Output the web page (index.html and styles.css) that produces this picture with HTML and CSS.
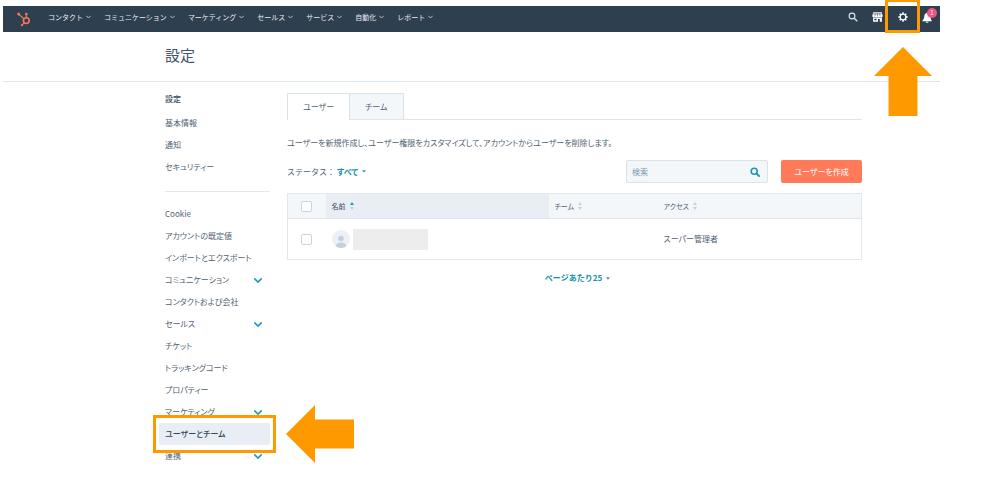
FILE: index.html
```html
<!DOCTYPE html>
<html lang="ja">
<head>
<meta charset="utf-8">
<meta name="viewport" content="width=device-width, initial-scale=1">
<title>設定</title>
<link rel="stylesheet" href="styles.css">
</head>
<body>
<svg class="defs" width="0" height="0" aria-hidden="true">
  <symbol id="chevron" viewBox="0 0 10 6"><path d="M1 1l4 4 4-4" fill="none" stroke="currentColor" stroke-width="2" stroke-linecap="round" stroke-linejoin="round"/></symbol>
  <symbol id="caret" viewBox="0 0 6 4"><path d="M0 0h6L3 4z" fill="currentColor"/></symbol>
  <symbol id="sort" viewBox="0 0 4 8"><path class="sort-up" d="M0 3l2-3 2 3z"/><path class="sort-down" d="M0 5h4L2 8z"/></symbol>
</svg>
<div class="app">
  <header class="topbar">
    <a class="logo" href="#" aria-label="ホーム">
      <svg width="14" height="15" viewBox="0 0 14 15" fill="none" stroke="#f8765a">
        <circle cx="9.3" cy="8.6" r="2.9" stroke-width="1.6"/>
        <path d="M9.3 5.5V2.4M7 6.7L1.8 2.4M7.2 10.8l-2 2" stroke-width="1.2"/>
        <g fill="#f8765a" stroke="none"><circle cx="9.3" cy="2" r="1.3"/><circle cx="1.7" cy="2.1" r="1.5"/><circle cx="4.9" cy="13.2" r="1.1"/></g>
      </svg>
    </a>
    <nav class="topnav">
      <button class="topnav-item">コンタクト<svg class="chev-small"><use href="#chevron"/></svg></button>
      <button class="topnav-item">コミュニケーション<svg class="chev-small"><use href="#chevron"/></svg></button>
      <button class="topnav-item">マーケティング<svg class="chev-small"><use href="#chevron"/></svg></button>
      <button class="topnav-item">セールス<svg class="chev-small"><use href="#chevron"/></svg></button>
      <button class="topnav-item">サービス<svg class="chev-small"><use href="#chevron"/></svg></button>
      <button class="topnav-item">自動化<svg class="chev-small"><use href="#chevron"/></svg></button>
      <button class="topnav-item">レポート<svg class="chev-small"><use href="#chevron"/></svg></button>
    </nav>
    <div class="tools">
      <button class="tool" aria-label="検索">
        <svg width="10" height="10" viewBox="0 0 10 10" fill="none" stroke="#dfe5ec"><circle cx="4" cy="4" r="2.9" stroke-width="1.1"/><path d="M6.2 6.2L9.3 9.3" stroke-width="1.3"/></svg>
      </button>
      <button class="tool" aria-label="マーケットプレイス">
        <svg width="11" height="10" viewBox="0 0 11 10"><path d="M1.2.2h8.6l.9 3.6c0 1-.6 1.5-1.2 1.5S8.3 4.900 8.1 4.400C7.900 4.900 7.400 5.300 6.800 5.300S5.700 4.900 5.500 4.400c-.2.5-.7.9-1.300.9s-1.100-.4-1.300-.9c-.2.5-.8.9-1.400.9S.3 4.800.3 3.800z" fill="#fff"/><path d="M3.400.8l-.4 3M5.500.8v3M7.600.8l.4 3M.8 1.900h9.400" stroke="#2e3f50" stroke-width=".5"/><path d="M1.100 5.600h8.800v4.200H7.800V7.100H6v2.700H1.100zM2.300 6.800v1.500h2.300V6.800z" fill="#fff" fill-rule="evenodd"/></svg>
      </button>
      <button class="tool gear" aria-label="設定">
        <svg width="10" height="10" viewBox="0 0 10 10" fill="none" stroke="#fff"><circle cx="5" cy="5" r="2.900" stroke-width="1.300"/><path d="M5 .3v1.800M5 7.900v1.800M.3 5h1.800M7.900 5h1.800M1.700 1.700l1.200 1.200M7.100 7.100l1.200 1.200M1.700 8.300l1.200-1.200M7.100 2.900l1.200-1.200" stroke-width="1.500"/></svg>
      </button>
      <button class="tool" aria-label="通知 1件">
        <svg width="11" height="11" viewBox="0 0 11 11" fill="#fff"><path d="M5.500.8C3 1 2.300 3 2.200 5 2.100 6.800 1.300 7.600.5 8.500V9.200h9.200V8.500C8.800 7.600 8.700 6.500 8.600 5 8.500 3 8 1 5.500.8zM3.600 9.700h3c-.2 1.400-2.800 1.400-3 0z"/></svg>
        <span class="badge">1</span>
      </button>
    </div>
    <div class="mark-gear"></div>
    <svg class="arrow-up" width="58" height="69" viewBox="0 0 58 69"><path d="M29 0l29 29H43.500v40h-29V29H0z" fill="#ff9900"/></svg>
  </header>
  <div class="page-head"><h1>設定</h1></div>
  <div class="layout">
    <aside class="side">
      <h2>設定</h2>
      <ul class="menu">
        <li><a href="#">基本情報</a></li>
        <li><a href="#">通知</a></li>
        <li><a href="#">セキュリティー</a></li>
      </ul>
      <hr>
      <ul class="menu">
        <li><a href="#">Cookie</a></li>
        <li><a href="#">アカウントの既定値</a></li>
        <li><a href="#">インポートとエクスポート</a></li>
        <li><a href="#">コミュニケーション<svg class="chev"><use href="#chevron"/></svg></a></li>
        <li><a href="#">コンタクトおよび会社</a></li>
        <li><a href="#">セールス<svg class="chev"><use href="#chevron"/></svg></a></li>
        <li><a href="#">チケット</a></li>
        <li><a href="#">トラッキングコード</a></li>
        <li><a href="#">プロパティー</a></li>
        <li><a href="#">マーケティング<svg class="chev"><use href="#chevron"/></svg></a></li>
        <li class="current"><a href="#" aria-current="page">ユーザーとチーム</a>
          <span class="mark-menu"></span>
          <svg class="arrow-left" width="68" height="58" viewBox="0 0 68 58"><path d="M0 29L29 0v14.500h39v29H29V58z" fill="#ff9900"/></svg>
        </li>
        <li><a href="#">連携<svg class="chev"><use href="#chevron"/></svg></a></li>
      </ul>
    </aside>
    <main class="main">
      <div class="tabs" role="tablist">
        <button class="tab active" role="tab" aria-selected="true">ユーザー</button>
        <button class="tab" role="tab" aria-selected="false">チーム</button>
      </div>
      <p class="lead">ユーザーを新規作成し、ユーザー権限をカスタマイズして、アカウントからユーザーを削除します。</p>
      <div class="filters">
        <span class="filter-label">ステータス：</span>
        <button class="link-button">すべて<svg class="caret"><use href="#caret"/></svg></button>
        <label class="search">
          <input type="search" placeholder="検索" aria-label="検索">
          <svg width="10" height="10" viewBox="0 0 10 10" fill="none" stroke="#1c98b2"><circle cx="4.200" cy="4.200" r="3" stroke-width="1.600"/><path d="M6.400 6.400L9 9" stroke-width="1.900" stroke-linecap="round"/></svg>
        </label>
        <button class="primary">ユーザーを作成</button>
      </div>
      <table class="users">
        <colgroup><col class="col-check"><col class="col-name"><col class="col-team"><col></colgroup>
        <thead>
          <tr>
            <th><input type="checkbox" aria-label="すべて選択"></th>
            <th class="sorted">名前<svg class="sort"><use href="#sort"/></svg></th>
            <th>チーム<svg class="sort"><use href="#sort"/></svg></th>
            <th>アクセス<svg class="sort"><use href="#sort"/></svg></th>
          </tr>
        </thead>
        <tbody>
          <tr>
            <td><input type="checkbox" aria-label="ユーザーを選択"></td>
            <td><div class="person">
              <svg width="18" height="18" viewBox="0 0 18 18"><circle cx="9" cy="9" r="9" fill="#edf1f6"/><circle cx="9" cy="8.500" r="2.800" fill="#c4d0df"/><path d="M3.800 16.200c0-5 10.400-5 10.400 0-3 2.400-7.400 2.400-10.400 0z" fill="#c4d0df"/></svg>
              <span class="redacted"></span></div></td>
            <td></td>
            <td>スーパー管理者</td>
          </tr>
        </tbody>
      </table>
      <div class="pager"><button class="link-button">ページあたり25<svg class="caret"><use href="#caret"/></svg></button></div>
    </main>
  </div>
</div>
</body>
</html>
```
FILE: styles.css
```css
* { box-sizing: border-box; }

body {
  margin: 0;
  background: #fff;
  color: #506172;
  font: 8px/12px "Noto Sans CJK JP", sans-serif;
  font-feature-settings: "palt";
}

.defs { position: absolute; }
svg { display: block; flex: none; }
h1, h2, p, ul { margin: 0; padding: 0; }
ul { list-style: none; }
a { color: inherit; text-decoration: none; }
button {
  margin: 0;
  padding: 0;
  border: 0;
  background: none;
  color: inherit;
  font: inherit;
  font-feature-settings: inherit;
  cursor: pointer;
}

.app { margin: 6px 60px 0 3px; }

.topbar {
  position: relative;
  display: flex;
  align-items: center;
  height: 26px;
  padding: 0 7px 4px 14px;
  background: #2e3f50;
  color: #e8edf2;
}
.logo { margin: 4px 17px 0 0; }
.topnav { display: flex; gap: 13px; font-size: 7px; font-feature-settings: normal; }
.topnav-item { display: flex; align-items: center; gap: 3px; }
.chev-small { width: 5px; height: 4px; color: #b5c0cc; }
.tools { display: flex; gap: 14px; margin-left: auto; }
.tool { position: relative; display: grid; place-items: center; width: 11px; height: 12px; }
.badge {
  position: absolute;
  top: -3px;
  left: 5px;
  width: 10px;
  height: 10px;
  border-radius: 50%;
  background: #f2547d;
  color: #fff;
  font-size: 6px;
  line-height: 10px;
  text-align: center;
}
.mark-gear {
  position: absolute;
  top: -7px;
  right: 20px;
  width: 35px;
  height: 34px;
  border: 3px solid #ff9900;
}
.arrow-up { position: absolute; top: 41px; right: 8px; z-index: 1; }

.page-head { padding: 11px 0 14px 162px; border-bottom: 1px solid #dfe5ed; }
h1 { color: #425467; font-size: 15px; font-weight: 400; line-height: 24px; font-feature-settings: normal; }

.layout {
  display: grid;
  grid-template-columns: 111px 1fr;
  gap: 17px;
  padding: 11px 78px 0 156px;
}
.side h2 { margin: 0 0 7px 6px; color: #33475b; font-size: 8px; font-weight: 500; line-height: 12px; }
.side hr { height: 1px; margin: 13px 0 11px 6px; border: 0; background: #e3e8ef; }
.menu a {
  display: flex;
  align-items: center;
  justify-content: space-between;
  height: 22px;
  padding: 0 8px 0 6px;
  white-space: nowrap;
}
.chev { width: 8px; height: 5px; color: #1c9fb8; }
.current { position: relative; }
.current a { border-radius: 2px; background: #e9eef5; color: #33475b; font-weight: 500; }
.mark-menu {
  position: absolute;
  top: -8px;
  left: -6px;
  width: 123px;
  height: 38px;
  border: 3px solid #ff9900;
}
.arrow-left { position: absolute; top: -18px; left: 127px; }

.tabs { display: flex; border-bottom: 1px solid #dfe5ed; }
.tab {
  height: 26px;
  padding: 0 15px;
  border: 1px solid #dae2eb;
  border-bottom: 0;
  border-left: 0;
  background: #f4f7fa;
}
.tab.active { height: 27px; margin-bottom: -1px; border-left: 1px solid #dae2eb; background: #fff; }
.lead { margin: 17px 0 11px; }
.filters { display: flex; align-items: center; }
.filter-label { margin-right: 2px; font-feature-settings: normal; }
.link-button { display: flex; align-items: center; gap: 4px; color: #1590ab; font-weight: 700; }
.pager .link-button { font-feature-settings: normal; }
.caret { width: 4px; height: 3px; color: #5c8fac; }
.search {
  display: flex;
  align-items: center;
  width: 142px;
  height: 23px;
  margin: 0 13px 0 auto;
  padding: 0 7px 0 5px;
  border: 1px solid #dae2eb;
  border-radius: 2px;
  background: #f4f7fa;
}
.search input { flex: 1; min-width: 0; padding: 0; border: 0; outline: 0; background: none; color: inherit; font: inherit; }
.search input::placeholder { color: #7c98b0; opacity: 1; }
.primary { width: 81px; height: 23px; border-radius: 2px; background: #ff7a59; color: #fff; }

.users {
  width: 100%;
  margin-top: 10px;
  border: 1px solid #e3e8ef;
  border-collapse: collapse;
  table-layout: fixed;
}
.col-check { width: 38px; }
.col-name { width: 223px; }
.col-team { width: 109px; }
th, td { padding: 0 6px; text-align: left; vertical-align: middle; }
th { height: 25px; background: #f4f7fa; border-bottom: 1px solid #dfe5ed; font-size: 7px; font-weight: 400; }
td { height: 41px; }
th.sorted { background: #e9eef5; color: #33475b; }
.users input {
  display: block;
  width: 11px;
  height: 11px;
  margin: 0 auto;
  border: 1px solid #c8d4e2;
  border-radius: 2px;
  background: #fff;
  appearance: none;
}
.sort { display: inline-block; width: 4px; height: 8px; margin-left: 4px; vertical-align: -1px; fill: #c4d0df; }
.sorted .sort { --up: #00a4bd; }
.sort-up { fill: var(--up, #c4d0df); }
.person { display: flex; align-items: center; gap: 3px; }
.redacted { width: 75px; height: 21px; background: #ededed; }
.pager { display: flex; justify-content: center; margin: 12px 0 0 6px; }
```
